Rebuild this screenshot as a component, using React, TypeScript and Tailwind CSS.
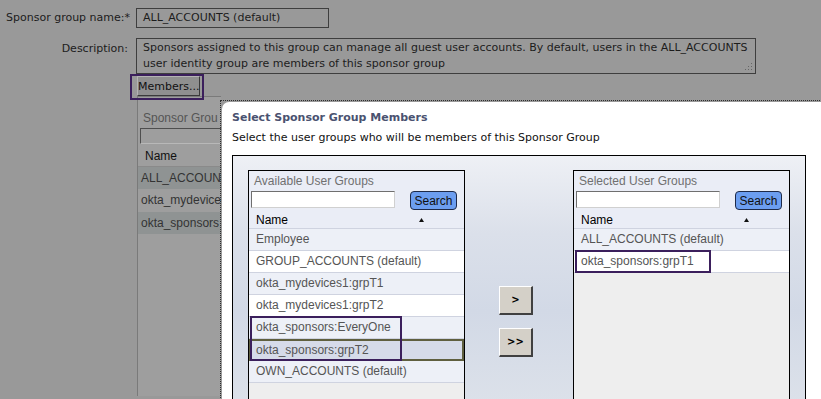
const availableGroups = [
  "Employee",
  "GROUP_ACCOUNTS (default)",
  "okta_mydevices1:grpT1",
  "okta_mydevices1:grpT2",
  "okta_sponsors:EveryOne",
  "okta_sponsors:grpT2",
  "OWN_ACCOUNTS (default)",
];

const selectedGroups = ["ALL_ACCOUNTS (default)", "okta_sponsors:grpT1"];

function SortArrow() {
  return (
    <svg width="5" height="4" viewBox="0 0 5 4" className="block">
      <path d="M2.5 0 L5 4 L0 4 Z" fill="#111" />
    </svg>
  );
}

// mark = [rowIndex, rowCount, width] for the purple highlight frame
function ListPanel({
  title,
  rows,
  selected,
  mark,
}: {
  title: string;
  rows: string[];
  selected?: number;
  mark?: [number, number, number];
}) {
  return (
    <div className="w-[217px] h-[240px] shrink-0 border border-black bg-[#eeeeee] font-['Liberation_Sans',Arial,sans-serif] text-[12px]">
      <div className="bg-[#eaedf6] border-b border-[#cfd3e0]">
        <div className="pl-[5px] pt-[4px] h-[20px] leading-[13px] text-[#707070]">{title}</div>
        <div className="flex items-start pl-[2px] h-[20px]">
          <div className="w-[144px] h-[17px] bg-white border border-[#6f6f6f] border-b-[#d0d0d0] border-r-[#d0d0d0]" />
          <button className="ml-[15px] w-[47px] h-[19px] rounded-[4px] border border-[#1e2a48] bg-[#6c9ef0] text-[12px] leading-[16px] text-[#111]">
            Search
          </button>
        </div>
        <div className="flex items-center h-[17px] pl-[7px] pr-[40px] justify-between text-black">
          <span className="leading-[14px]">Name</span>
          <SortArrow />
        </div>
      </div>
      {rows.map((r, i) => {
        const isSel = selected === i;
        const markHere = mark && mark[0] === i;
        return (
          <div
            key={r}
            className={
              isSel
                ? "relative h-[22px] bg-[#d6dbe9] border-2 border-[#5f5f3f] pl-[5px] leading-[18px] text-[#555]"
                : i % 2 === 0
                ? "relative h-[22px] bg-[#edf0f7] border-b border-[#cfd3e0] pl-[7px] leading-[21px] text-[#555]"
                : "relative h-[22px] bg-white border-b border-[#cfd3e0] pl-[7px] leading-[21px] text-[#555]"
            }
          >
            {r}
            {markHere && (
              <div
                className="absolute left-[1px] top-[-1px] z-10 border-2 border-[#3b1f5c]"
                style={{ width: mark[2], height: mark[1] * 22 + 1 }}
              />
            )}
          </div>
        );
      })}
    </div>
  );
}

function MoveButton({ label }: { label: string }) {
  return (
    <button className="w-[34px] h-[29px] bg-[#d4d0c8] border-t border-l border-white border-b-2 border-r-2 border-b-[#404040] border-r-[#404040] text-[10px] font-bold text-black leading-[26px]">
      {label}
    </button>
  );
}

export default function App() {
  return (
    <div className="relative w-[821px] h-[399px] overflow-hidden bg-[#999999] text-[#1c1c1c] text-[11px] font-['DejaVu_Sans',Verdana,sans-serif]">
      <div className="flex items-center pt-[8px]">
        <div className="w-[136px] pr-[6px] text-right">Sponsor group name:*</div>
        <div className="w-[193px] h-[20px] border border-[#3e3e3e] pl-[6px] leading-[18px]">ALL_ACCOUNTS (default)</div>
      </div>

      <div className="flex mt-[10px]">
        <div className="w-[136px] pr-[8px] pt-[3px] text-right leading-[16px]">Description:</div>
        <div className="relative w-[620px] h-[36px] border border-[#3e3e3e] px-[6px] pt-[1px] leading-[16px]">
          Sponsors assigned to this group can manage all guest user accounts. By default, users in the ALL_ACCOUNTS
          user identity group are members of this sponsor group
          <svg width="8" height="8" viewBox="0 0 8 8" className="absolute right-[2px] bottom-[2px]">
            <rect x="6" y="0" width="1" height="1" fill="#666" />
            <rect x="3" y="3" width="1" height="1" fill="#666" />
            <rect x="6" y="3" width="1" height="1" fill="#666" />
            <rect x="0" y="6" width="1" height="1" fill="#666" />
            <rect x="3" y="6" width="1" height="1" fill="#666" />
            <rect x="6" y="6" width="1" height="1" fill="#666" />
          </svg>
        </div>
      </div>

      <div className="relative z-10 ml-[130px] w-[74px] h-[26px] border-2 border-[#3b1f5c]">
        <button className="ml-[5px] w-[63px] h-[20px] bg-[#8f8f8f] border border-[#b4b4b4] border-b-[#3a3a3a] border-r-[#3a3a3a] text-[11px] leading-[17px] text-[#111]">
          Members...
        </button>
      </div>

      {/* page content hidden behind the dialog */}
      <div className="-mt-[4px] ml-[137px] w-[84px] overflow-hidden whitespace-nowrap border-t border-l border-[#7a7a7a] bg-[#9e9e9e] h-[300px] font-['Liberation_Sans',Arial,sans-serif] text-[12px]">
        <div className="pl-[5px] pt-[14px] leading-[14px] text-[#555]">Sponsor Grou</div>
        <div className="ml-[2px] mt-[3px] w-[100px] h-[16px] border border-[#4e4e4e] border-b-[#b8b8b8] border-r-[#b8b8b8]" />
        <div className="pl-[7px] h-[23px] leading-[24px] text-[#111] border-b border-[#8a8a8a]">Name</div>
        <div className="h-[22px] bg-[#8f9393] pl-[3px] leading-[22px] text-[#333]">ALL_ACCOUN</div>
        <div className="h-[23px] pl-[3px] leading-[23px] text-[#333]">okta_mydevice</div>
        <div className="h-[22px] bg-[#8f9393] pl-[3px] leading-[22px] text-[#333]">okta_sponsors</div>
      </div>

      <div className="absolute left-[220px] top-[100px] w-[620px] h-[320px] border-t border-l border-dotted border-[#2e2e2e]">
        <div className="mt-[1px] ml-[1px] h-full bg-white rounded-tl-[7px] pl-[10px] pt-[9px]">
          <div className="font-bold text-[#4a5270] leading-[14px]">Select Sponsor Group Members</div>
          <div className="mt-[6px] leading-[14px] text-[#111]">Select the user groups who will be members of this Sponsor Group</div>
          <div className="mt-[10px] w-[574px] h-[260px] border border-black bg-[linear-gradient(180deg,#eef0f5_0%,#dbe0ea_30%,#d2d9e6_60%,#dde2ea_100%)] pl-[15px] pt-[14px] flex items-start">
            <ListPanel title="Available User Groups" rows={availableGroups} selected={5} mark={[4, 2, 152]} />
            <div className="ml-[34px] mt-[116px] flex flex-col gap-[13px]">
              <MoveButton label=">" />
              <MoveButton label=">>" />
            </div>
            <div className="ml-[40px]">
              <ListPanel title="Selected User Groups" rows={selectedGroups} mark={[1, 1, 136]} />
            </div>
          </div>
        </div>
      </div>
    </div>
  );
}
